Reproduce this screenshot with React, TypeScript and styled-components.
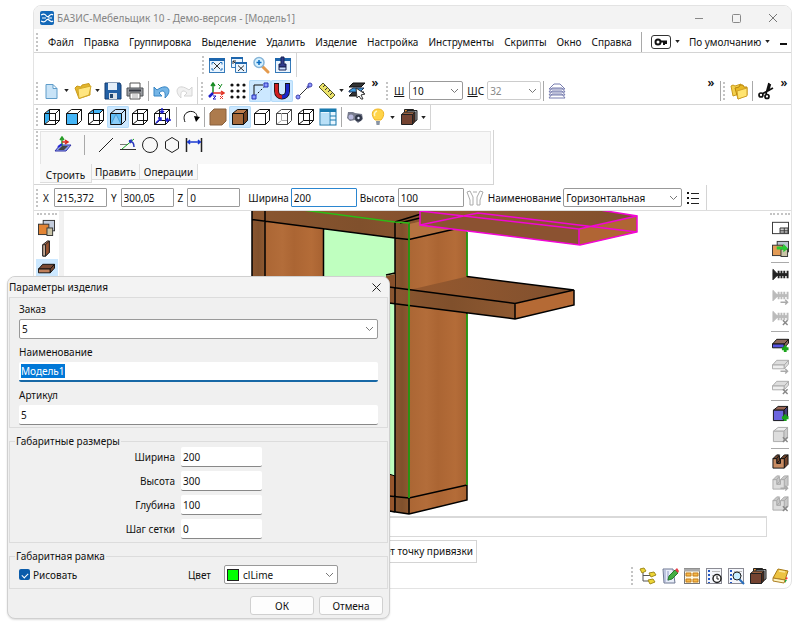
import React, { ReactNode, useEffect, useRef } from 'react';
import styled, { createGlobalStyle, css } from 'styled-components';

const uiFont = '"Noto Sans", "Open Sans", sans-serif';

const GlobalStyle = createGlobalStyle`
  * { box-sizing: border-box; }
  body { margin: 0; background: #fff; color: #111; font: 10px/14px ${uiFont}; }
  button, input, select { font: inherit; color: inherit; margin: 0; }
  svg { display: block; flex: none; }
`;

/* ---------- icons ---------- */

const Cube = ({ front = 'none', top = 'none', side = 'none', back = true, color = '#111' }: { front?: string; top?: string; side?: string; back?: boolean; color?: string }) => (
  <g stroke={color} strokeLinejoin="round" fill="none">
    <path d="M1.5 5.5 6.5 1.5H16.5L12.5 5.5Z" fill={top} />
    <path d="M12.5 5.5 16.5 1.5V12.5L12.5 16.5Z" fill={side} />
    <path d="M1.5 5.5H12.5V16.5H1.5Z" fill={front} />
    {back && <path d="M6.5 1.5V12.5H16.5M6.5 12.5 1.5 16.5" />}
  </g>
);

const Board = ({ a = '#7a4a34', b = '#c0805c', line = '#111' }: { a?: string; b?: string; line?: string }) => (
  <g stroke={line} strokeLinejoin="round">
    <path d="M.5 8.500 5 3.500H17.500L13 8.500Z" fill={a} />
    <path d="M.5 8.500H13V12.500H.5Z" fill={b} />
    <path d="M13 8.500 17.500 3.500V7.500L13 12.500Z" fill={a} />
  </g>
);

const Screw = ({ color }: { color: string }) => (
  <g stroke={color} fill={color}>
    <path d="M1 2.500 5 6.500V9.500L1 13.500Z" />
    <path d="M1 8H17" strokeWidth="3" />
    <path d="M7 4V12M10 4V12M13 4V12M16.500 4V12" strokeWidth="2" />
  </g>
);

const Groove = ({ a = '#c78b62', b = '#71442b', line = '#111' }: { a?: string; b?: string; line?: string }) => (
  <g stroke={line} strokeLinejoin="round">
    <path d="M1 6 5 2H8L5 6ZM9 6 13 2H17L13 6ZM13 6 17 2V12L13 16Z" fill={b} />
    <path d="M5 6 8 3V8L5 11Z" fill={b} />
    <path d="M5 11 8 8H9V11Z" fill={b} />
    <path d="M1 6H5V11H9V6H13V16H1Z" fill={a} />
  </g>
);

const plus = <path d="M14 10V17M10.500 13.500H17.500" stroke="#1aa51a" strokeWidth="3" />;
const arrow = <path d="M9 15H16M14 12.500 16.500 15 14 17.500" stroke="#aaa" fill="none" strokeWidth="1.500" />;
const cross = <path d="M11.500 12 16.500 17M16.500 12 11.500 17" stroke="#888" strokeWidth="1.500" />;
const frame = (
  <>
    <rect x="1.500" y="2.500" width="15" height="14" fill="#eaf5ff" stroke="#3579b8" />
    <path d="M1 3.500H17" stroke="#1e66ad" strokeWidth="3" />
  </>
);
const sheet = (
  <>
    <rect x="1.500" y="1.500" width="15" height="15" fill="#f4f6fb" stroke="#8b8b94" />
    <path d="M4 3V16" stroke="#2457c5" strokeWidth="2" strokeDasharray="2 2" />
    <path d="M7 4.500H15M7 8.500H15" stroke="#bbb" />
  </>
);
const folder = (
  <>
    <path d="M1 6 3 4 7 5 8 3 15 1.500 16 4V13L5 16.500Z" fill="#e3b52c" stroke="#c99a1b" />
    <path d="M4 7 17 4 15 13 5 16.500Z" fill="#ffe680" stroke="#d3a928" />
  </>
);
const woodBoxes = (
  <g stroke="#222" strokeLinejoin="round">
    <path d="M4.500 1.500H13.500V5H4.500Z" fill="#e9953b" />
    <path d="M7 2.500H17V12L14 14H7Z" fill="#a4a7ac" />
    <path d="M1.500 6.500 4.500 4H15L12.500 6.500Z" fill="#98603f" />
    <path d="M12.500 6.500 15 4V13.500L12.500 16.500Z" fill="#4b2a1c" />
    <rect x="1.500" y="6.500" width="11" height="10" fill="#744331" />
  </g>
);

const icons: Record<string, ReactNode> = {
  fit: <>{frame}<path d="M6 7 12 13M12 7 6 13" stroke="#333" /><path d="M4 8.500V6.500H6M12 6.500H14V8.500M14 12V14H12M6 14H4V12" stroke="#2573bd" fill="none" /></>,
  fitMany: <><path d="M1.500 1.500H12.500V11.500H1.500Z" fill="#eaf5ff" stroke="#3579b8" /><path d="M1 2H13" stroke="#1e66ad" strokeWidth="2" /><path d="M3 5 6 8M3 8V5H6" stroke="#333" fill="none" /><path d="M5.500 6.500H16.500V16.500H5.500Z" fill="#eaf5ff" stroke="#3579b8" /><path d="M5 7H17" stroke="#1e66ad" strokeWidth="2" /><path d="M8 9.500 14 15M14 9.500 8 15" stroke="#333" /></>,
  zoom: <><path d="M10 10 16 16" stroke="#e49a4d" strokeWidth="3" strokeLinecap="round" /><circle cx="7" cy="6.500" r="5" fill="#d7f2ff" stroke="#87b5d8" strokeWidth="1.500" /><path d="M4.500 6.500H9.500M7 4V9" stroke="#0b6dc2" strokeWidth="1.500" /></>,
  brush: <>{frame}<path d="M7 1H10V8H12V11H5V8H7Z" fill="#303b8c" stroke="#172052" /><path d="M5 11H12V14H5Z" fill="#c9ddff" stroke="#172052" /></>,
  newFile: <path d="M3 2.500H10L14 6.500V16.500H3ZM10 2.500V6.500H14" fill="#c8e3f7" stroke="#5f9cc9" />,
  folder,
  folders: <><path d="M1 4 3 3 5 4 11 2 12 11 3 14Z" fill="#f3cf4b" stroke="#c99a1b" /><path d="M5 6 9 5 10 3 13 3 14 5 17 5V13L8 17Z" fill="#e8b923" stroke="#b9860c" /><path d="M7 9 17 6V14L8 17Z" fill="#ffe470" stroke="#cfa027" /></>,
  save: <><path d="M1 1H16L17 3V17H1Z" fill="#2360a5" stroke="#153d70" /><path d="M4 1H13V8H4Z" fill="#e4eef8" /><path d="M5 11H13V17H5Z" fill="#dce2e8" /><path d="M6 12H9V16H6Z" fill="#24476f" /></>,
  print: <><path d="M4 1H14V7H4Z" fill="#fff" stroke="#555" /><path d="M1 6H17V14H1Z" fill="#9a9da2" stroke="#4f5257" /><path d="M3 8.500H15" stroke="#343840" strokeWidth="2" /><path d="M4 11H14V17H4Z" fill="#fff" stroke="#555" /><path d="M6 13H12M6 15H12" stroke="#aaa" /></>,
  undo: <path d="M1 5V14H9L6 11C10 7 13 9 12 16C20 9 15 0 4 8Z" fill="#75b5e6" stroke="#3684c3" />,
  redo: <path d="M17 5V14H9L12 11C8 7 5 9 6 16C-2 9 3 0 14 8Z" fill="#f1f1f1" stroke="#d4d4d4" />,
  axes: <g fill="none" strokeWidth="1.500"><path d="M6 11V2M4 4 6 1 8 4" stroke="#168c22" /><path d="M6 11H16M14 9 17 11 14 13" stroke="#e33427" /><path d="M6 11 2 15" stroke="#1919c8" strokeWidth="2.500" /><path d="M11 2 13 4M15 2 12 7" stroke="#168c22" strokeWidth="1" /><path d="M6 14H9L6 17H9" stroke="#1919c8" strokeWidth="1" /><path d="M13 14 16 17M16 14 13 17" stroke="#e33427" strokeWidth="1" /></g>,
  dots: <g fill="#111">{[3, 9, 15].map(x => [3, 9, 15].map(y => <circle key={`${x}${y}`} cx={x} cy={y} r="1.600" />))}</g>,
  snap: <g fill="none" stroke="#111"><path d="M3 13V3H12" /><path d="M4 14 14 4" strokeDasharray="2 2" /><path d="M1 13H5V17H1ZM13 1H17V5H13Z" fill="#8f9cff" stroke="#2531b5" /></g>,
  magnet: <><path d="M3.500 1V9C3.500 17 14.500 17 14.500 9V1" fill="none" stroke="#111" strokeWidth="5" /><path d="M3.500 2V9C3.500 13 6 15 9 15" fill="none" stroke="#cf1f1f" strokeWidth="3.500" /><path d="M14.500 2V9C14.500 13 12 15 9 15" fill="none" stroke="#1a26c8" strokeWidth="3.500" /></>,
  nodes: <><path d="M3 15 15 3" stroke="#333" /><g fill="#8c97ff" stroke="#4244ad"><circle cx="3" cy="15" r="2" /><circle cx="15" cy="3" r="2" /><circle cx="13" cy="5" r="1" /></g></>,
  ruler: <><path d="M1 5 5 1 17 13 13 17Z" fill="#ece36a" stroke="#57572a" /><path d="M7 3 5 5M9.500 5.500 7 8M12 8 10 10M14.500 10.500 12 13" stroke="#333" /></>,
  layerPick: <><path d="M1 5 5 1H17L13 5Z M1 14 5 10H16L12 14Z" fill="#333" stroke="#111" /><path d="M1 9 5 6H16L12 10H1Z" fill="#3d9de0" stroke="#235" /><path d="M8 6 17 12 13 13 15 17 13 17 11 14 9 16Z" fill="#fff" stroke="#333" /></>,
  layers: <g fill="#fff" stroke="#777caf"><path d="M1 16 4 12H14L17 16Z M1 13 4 9H14L17 13Z M1 10 4 6H14L17 10ZM1 7 6 2H12L17 7Z" /></g>,
  scissors: <g fill="none" stroke="#111" strokeWidth="1.700"><path d="M12 1 9 12M16 6 5 12" /><circle cx="4" cy="13" r="2" /><circle cx="10" cy="14.500" r="2" /><path d="M13 2 11 9" strokeWidth="2.500" /></g>,
  cubeLeft: <><path d="M2 6 6 2V12L2 16Z" fill="#34aef0" /><Cube /></>,
  cubeFront: <Cube front="#45b6f7" back={false} />,
  cubeTop: <Cube top="#45b6f7" />,
  cubeAll: <><Cube front="#62bff7" back={false} /><path d="M2 16 7 6 12 16" fill="#8bcdf8" stroke="#4a9fd4" /></>,
  cubeBottom: <Cube />,
  cubeSections: <><Cube /><path d="M9 0V5M7 3 9 5 11 3M18 12H13M15 10 13 12 15 14M3 15 8 10M5 10H8V13" stroke="#2424d6" fill="none" strokeWidth="1.500" /></>,
  rotate: <><path d="M3 14C-2 2 15 0 15 9" stroke="#111" fill="none" /><path d="M12 8 18 9 14 14Z" /></>,
  wood: <path d="M1 5 5 1H17V13L13 17H1Z" fill="#ad7b4d" stroke="#87613e" />,
  woodCube: <Cube front="#a66a3c" top="#bc7c4d" side="#744323" back={false} />,
  cubeWhite: <Cube front="#fff" back={false} />,
  cubePale: <><Cube back={false} color="#444" /><path d="M6.500 5V12.500H12M6 13 2 16" stroke="#aaa" fill="none" /></>,
  cubeWire: <Cube />,
  layout: <><rect x="1" y="1" width="16" height="16" fill="#e8f6ff" stroke="#1675a9" /><path d="M1 2.500H17" stroke="#197bb0" strokeWidth="3" /><path d="M11 4V17M11 8H17M11 12H17" stroke="#197bb0" /><path d="M2 5H10V16H2Z" fill="#b9e0f7" /></>,
  camera: <><path d="M2 4H7L9 5 16 6 17 11 12 15 9 12 4 13 1 10Z" fill="#777b8c" /><circle cx="12.500" cy="10" r="3.500" fill="#333a4b" /><circle cx="5" cy="9" r="2.500" fill="#b8b9dd" /><circle cx="12.500" cy="10" r="1.200" fill="#e7edff" /></>,
  bulb: <><path d="M9 1C2 1 2 8 6 12H12C16 8 16 1 9 1Z" fill="#ffd448" stroke="#efb527" /><path d="M8 3C5 4 5 7 6 8" stroke="#fff6c8" strokeWidth="1.500" fill="none" /><path d="M7 13H11L10.500 17H7.500Z" fill="#8994a3" /></>,
  woodBoxes,
  plane: <><path d="M1 15 6 9H17L12 15Z" fill="#8da1ed" stroke="#3130a5" /><path d="M4 14 8 10H14L10 14Z" fill="#444" /><path d="M8 10V2M6 4 8 1 10 4" stroke="#289d29" fill="none" strokeWidth="1.500" /><path d="M8 6H13M11 4 14 6 11 8" stroke="#d6291f" fill="none" strokeWidth="1.500" /><path d="M8 8 4 11" stroke="#2424d6" strokeWidth="2" /></>,
  line: <path d="M2 16 16 2" stroke="#222" />,
  angle: <><path d="M1 13.500H17" stroke="#333" /><path d="M1 8.500H9" stroke="#777" /><path d="M3 13 15 3" stroke="#17a124" /><path d="M10 5C14 5 15 8 15 11M10 5 13 4M10 5 12 7" stroke="#2838bd" fill="none" strokeWidth="1.500" /></>,
  circle: <circle cx="9" cy="9" r="7.500" fill="none" stroke="#222" />,
  hexagon: <path d="M9 1.500 15.500 5.500V12.500L9 16.500 2.500 12.500V5.500Z" fill="none" stroke="#222" />,
  dimension: <><path d="M1.500 2V16M16.500 2V16" stroke="#222" strokeWidth="1.500" /><path d="M2 6H16M5 4 3 6 5 8M13 4 15 6 13 8" stroke="#1b3ad1" fill="none" strokeWidth="1.500" /></>,
  hands: <g fill="#fff" stroke="#aaa"><path d="M1 3 4 2 7 8 7 16H4V11Z M17 3 14 2 11 8 11 16H14V11ZM7 3H11" /></g>,
  list: <><path d="M4 3V5M4 8V10M4 13V15" stroke="#111" strokeWidth="2" /><path d="M7 4.500H15M7 9.500H15M7 14.500H15" stroke="#222" /></>,
  panels: <g stroke="#333"><rect x="5.500" y="1.500" width="12" height="11" fill="#c3ccdc" /><rect x=".5" y="5.500" width="11" height="11" fill="#e28434" /><rect x="9.500" y="9.500" width="6" height="8" fill="#c9c4a7" /></g>,
  vertical: <g stroke="#222" strokeLinejoin="round"><path d="M5 5 10 1H12V13L8 17H5Z" fill="#a6684b" /><path d="M5 5H8V17H5Z" fill="#c5aa97" /><path d="M8 5 12 1V13L8 17Z" fill="#985331" /></g>,
  board: <Board />,
  workspace: <><rect x=".5" y="3.500" width="17" height="12" fill="#fff" stroke="#333" /><path d="M8.500 9.500H17V15H8.500ZM8.500 12.500H17M13 9.500V15" stroke="#333" fill="#ccc" /></>,
  panelsGo: <><g stroke="#333"><rect x="5.500" y="1.500" width="12" height="11" fill="#bbc5d0" /><rect x=".5" y="5.500" width="11" height="11" fill="#e39b56" /><rect x="9.500" y="9.500" width="7" height="8" fill="#c9c4a7" /></g><path d="M5 7H12V4L17 9 12 13V10H5Z" fill="#27c933" /></>,
  screw: <Screw color="#222" />,
  screwGo: <><Screw color="#bbb" />{arrow}</>,
  screwDel: <><Screw color="#bbb" />{cross}</>,
  boardAdd: <><Board b="#5654e1" a="#8d6a5c" />{plus}</>,
  boardGo: <><Board a="#ddd" b="#eee" line="#aaa" />{arrow}</>,
  boardDel: <><Board a="#ddd" b="#eee" line="#aaa" />{cross}</>,
  blockAdd: <><Cube front="#6c65df" side="#463f7a" top="#9a6756" back={false} />{plus}</>,
  blockDel: <><Cube front="#ddd" side="#ccc" top="#eee" color="#aaa" back={false} />{cross}</>,
  groove: <Groove />,
  grooveGo: <><Groove a="#ddd" b="#c8c8c8" line="#aaa" />{arrow}</>,
  grooveDel: <><Groove a="#ddd" b="#c8c8c8" line="#aaa" />{cross}</>,
  tree: <><path d="M4 4V14H11M4 8.500H11" fill="none" stroke="#555" /><g fill="#edd536" stroke="#a28b1c"><path d="M1 2 5 1 7 4 3 6Z M10 6 15 5 17 8 12 10Z M9 13 14 12 16 15 11 17Z" /></g></>,
  edit: <><path d="M2 2H12L14 16H3Z" fill="#e8edf8" stroke="#6c7692" /><path d="M4 3V15M7 4V14" stroke="#929cc5" /><path d="M7 13 8 9 14 3 17 6 11 12Z" fill="#45ad43" stroke="#277a2b" /><path d="M14 3 16 1 18 4 17 6Z" fill="#e63c46" /></>,
  cards: <><rect x="1.500" y="1.500" width="15" height="15" fill="#fff8df" stroke="#777" /><path d="M1 3H17" stroke="#aaa" strokeWidth="3" /><g fill="#f4b948" stroke="#c67c1a"><path d="M3 6H8V9H3ZM10 6H15V9H10ZM3 12H8V15H3ZM10 12H15V15H10Z" /></g></>,
  history: <>{sheet}<circle cx="12" cy="11.500" r="4" fill="#fff" stroke="#222" strokeWidth="1.500" /><path d="M12 9V12H14" stroke="#222" fill="none" /></>,
  search: <>{sheet}<path d="M12 12 17 17" stroke="#276ebc" strokeWidth="2" /><circle cx="10" cy="9" r="4" fill="#c8edff" stroke="#222" /></>,
  book: <><path d="M2 11 7 2 17 4 14 13Z" fill="#edc342" stroke="#a77a18" /><path d="M8 4 14 5" stroke="#fbe79a" strokeWidth="1.500" /><path d="M2 11 14 13 13 16 2 14Z" fill="#fff5c0" stroke="#ad7e23" /><path d="M15 10 17 11 15 13Z" fill="#f33" /><path d="M14 13 16 13 14 16Z" fill="#2a4" /></>,
};

const Icon = ({ name, size = 18 }: { name: string; size?: number }) => (
  <svg width={size} height={size} viewBox="0 0 18 18" aria-hidden="true">{icons[name]}</svg>
);

const Caret = () => <svg width="5" height="3" viewBox="0 0 6 4" aria-hidden="true"><path d="M0 0H6L3 4Z" fill="#222" /></svg>;

/* ---------- page parts ---------- */

const Page = styled.main`
  position: relative;
  padding: 5px 8px 39px 33px;
  min-height: 100vh;
`;

const AppWindow = styled.div`
  border: 1px solid #e3e3e3;
  border-radius: 8px;
  overflow: hidden;
  background: #fff;
`;

const TitleBar = styled.header`
  display: flex;
  align-items: center;
  height: 23px;
  padding-left: 6px;
  gap: 3px;
  background: #f3f3f3;
  color: #858585;
`;

const Fill = styled.span`
  flex: 1;
`;

const PlainButton = styled.button`
  display: flex;
  align-items: center;
  justify-content: center;
  padding: 0;
  border: 0;
  background: transparent;
  white-space: nowrap;
`;

const CaptionButton = styled(PlainButton)`
  width: 37px;
  height: 22px;
`;

const MenuBar = styled.nav`
  display: flex;
  align-items: center;
  height: 24px;
  padding: 2px 4px 0 2px;
  border-bottom: 1px solid #d4d4d4;
`;

const MenuItems = styled.div`
  display: flex;
  gap: 10px;
  margin-left: 10px;
`;

const Grip = styled.span<{ $horizontal?: boolean }>`
  flex: none;
  ${p => p.$horizontal
    ? css`width: 20px; height: 2px; border-top: 2px dotted #c4c4c4; margin: 2px 0;`
    : css`width: 2px; height: 18px; border-left: 2px dotted #c4c4c4;`}
`;

const Divider = styled.span<{ $gap?: number }>`
  flex: none;
  width: 1px;
  height: 20px;
  margin: 0 ${p => p.$gap ?? 4}px;
  background: #a9a9a9;
`;

const Bar = styled.div<{ $height: number; $line?: boolean }>`
  display: flex;
  align-items: center;
  height: ${p => p.$height}px;
  border-bottom: ${p => (p.$line ? '1px solid #d4d4d4' : 0)};
`;

const Band = styled.div<{ $left?: number; $line?: boolean }>`
  display: flex;
  align-items: center;
  align-self: stretch;
  padding: 0 2px;
  margin-left: ${p => p.$left ?? 0}px;
  border-right: 1px solid #d4d4d4;
  border-bottom: ${p => (p.$line ? '1px solid #d4d4d4' : 0)};
`;

const ToolGroup = styled.div<{ $left?: number; $gap?: number }>`
  display: flex;
  align-items: center;
  gap: ${p => p.$gap ?? 0}px;
  margin-left: ${p => p.$left ?? 0}px;
`;

const ToolButton = styled(PlainButton)<{ $active?: boolean; $wide?: boolean }>`
  flex: none;
  gap: 3px;
  width: ${p => (p.$wide ? 31 : 22)}px;
  height: 22px;
  border-radius: 2px;
  ${p => p.$active && css`background: #cce8ff; box-shadow: inset 0 0 0 1px #b5dcfa;`}
`;

const More = styled(PlainButton)`
  align-self: flex-start;
  width: 14px;
  height: 12px;
  font-size: 12px;
  font-weight: 600;
`;

const KeyButton = styled(PlainButton)`
  width: 20px;
  height: 14px;
  border: 1px solid #333;
  border-radius: 3px;
`;

const Field = styled.input<{ $width: number; $accent?: boolean }>`
  width: ${p => p.$width}px;
  height: 19px;
  padding: 0 2px;
  border: 1px solid ${p => (p.$accent ? '#2b86d0' : '#9b9b9b')};
  border-radius: 1px;
  background: #fff;
  outline: none;
`;

const Label = styled.label<{ $left?: number; $right?: number }>`
  margin-left: ${p => p.$left ?? 0}px;
  margin-right: ${p => p.$right ?? 0}px;
  white-space: nowrap;
`;

const SelectBox = styled.span<{ $width?: number; $muted?: boolean }>`
  display: grid;
  align-items: center;
  width: ${p => (p.$width ? `${p.$width}px` : '100%')};
  height: 19px;
  border: 1px solid ${p => (p.$muted ? '#ccc' : '#999')};
  border-radius: 2px;
  background: #fff;
  color: ${p => (p.$muted ? '#888' : '#111')};
  > * { grid-area: 1 / 1; }
  > svg { justify-self: end; margin-right: 3px; pointer-events: none; }
`;

const NativeSelect = styled.select<{ $indent?: number }>`
  appearance: none;
  width: 100%;
  padding: 0 14px 0 ${p => p.$indent ?? 2}px;
  border: 0;
  background: transparent;
  outline: none;
  &:disabled { opacity: 1; }
`;

const Swatch = styled.span`
  width: 12px;
  height: 12px;
  margin-left: 2px;
  border: 1px solid #222;
  background: #0f0;
`;

const Chevron = () => <svg width="9" height="6" viewBox="0 0 9 6" aria-hidden="true"><path d="M1 1 4.500 4.500 8 1" fill="none" stroke="#777" /></svg>;

function Select({ id, value, width, muted, swatch }: { id: string; value: string; width?: number; muted?: boolean; swatch?: boolean }) {
  return (
    <SelectBox $width={width} $muted={muted}>
      {swatch && <Swatch />}
      <NativeSelect id={id} disabled={muted} $indent={swatch ? 18 : 2}><option>{value}</option></NativeSelect>
      <Chevron />
    </SelectBox>
  );
}

const Ribbon = styled.section`
  display: flex;
  width: 460px;
  height: 55px;
  padding: 1px 2px 1px 2px;
  border-right: 1px solid #d4d4d4;
  border-bottom: 1px solid #d4d4d4;
  gap: 2px;
`;

const RibbonBody = styled.div`
  flex: 1;
`;

const RibbonTools = styled.div`
  display: flex;
  align-items: center;
  height: 33px;
  padding: 0 0 6px 11px;
  background: #f8f8f8;
  border: 1px solid #e4e4e4;
  border-width: 1px 1px 0 1px;
`;

const Tabs = styled.div`
  display: flex;
  align-items: flex-start;
`;

const Tab = styled(PlainButton)<{ $active?: boolean }>`
  height: ${p => (p.$active ? 19 : 16)}px;
  width: ${p => (p.$active ? 52 : 48)}px;
  padding-top: ${p => (p.$active ? 3 : 0)}px;
  background: #f8f8f8;
  border-right: 1px solid #ddd;
  border-bottom: 1px solid #ddd;
  &:last-child { width: 58px; }
`;

const Workspace = styled.div`
  display: flex;
  height: 306px;
  border-top: 1px solid #ddd;
`;

const SideBar = styled.div<{ $right?: boolean }>`
  display: flex;
  flex: none;
  flex-direction: column;
  align-items: center;
  width: ${p => (p.$right ? 22 : 25)}px;
  background: #fff;
`;

const Splitter = styled.div`
  width: 5px;
  background: #f1f1f1;
`;

const Rule = styled.span`
  width: 18px;
  height: 1px;
  margin: 3px 0 2px;
  background: #aaa;
`;

const SideButton = styled(PlainButton)<{ $active?: boolean }>`
  flex: none;
  width: 22px;
  height: 21px;
  ${p => p.$active && css`background: #cce8ff;`}
`;

const Viewport = styled.div`
  flex: 1;
  min-width: 0;
  overflow: hidden;
`;

const MessageBox = styled.div`
  height: 21px;
  margin-right: 24px;
  border: 1px solid #d9d9d9;
  border-width: 2px 1px 1px 0;
`;

const StatusRow = styled.div`
  display: flex;
  margin-top: 3px;
`;

const Status = styled.div`
  width: 443px;
  height: 23px;
  padding: 3px;
  border: 1px solid #d4d4d4;
  text-align: right;
`;

const BottomTools = styled.div`
  display: flex;
  align-items: center;
  justify-content: flex-end;
  height: 25px;
`;

/* ---------- dialog ---------- */

const Dialog = styled.form`
  position: absolute;
  left: 7px;
  top: 276px;
  width: 383px;
  border: 1px solid #d0d0d0;
  border-radius: 8px;
  overflow: hidden;
  background: #f0f0f0;
  box-shadow: 0 1px 2px #0002;
`;

const DialogTitle = styled.header`
  display: flex;
  align-items: center;
  justify-content: space-between;
  height: 20px;
  padding: 0 7px 0 1px;
  background: #f3f3f3;
`;

const Group = styled.fieldset<{ $height: number; $top?: number }>`
  min-width: 0;
  height: ${p => p.$height}px;
  margin: ${p => p.$top ?? 0}px 1px 0;
  padding: 0 9px;
  border: 1px solid #dcdcdc;
  > legend { margin-left: -4px; padding: 0 1px; line-height: 12px; }
`;

const Stack = styled.div`
  display: flex;
  flex-direction: column;
  padding-top: 3px;
  > label { height: 18px; padding-top: 1px; }
  > input, > span { height: 20px; margin-bottom: 5px; }
`;

const LineField = styled.input<{ $focused?: boolean }>`
  width: 100%;
  height: 20px;
  padding: 0 2px;
  border: 0;
  border-bottom: ${p => (p.$focused ? '2px solid #1768a6' : '1px solid #888')};
  border-radius: 2px;
  background: #fff;
  outline: none;
  &::selection { background: #0078d7; color: #fff; }
`;

const SizeGrid = styled.div`
  display: grid;
  grid-template-columns: 156px 81px;
  gap: 4px 6px;
  align-items: center;
  > label { text-align: right; }
`;

const FrameRow = styled.div`
  display: flex;
  align-items: center;
  padding: 3px 40px 0 0;
`;

const Check = styled.input`
  display: grid;
  place-items: center;
  appearance: none;
  width: 11px;
  height: 11px;
  margin: 0 3px 0 0;
  border-radius: 2px;
  background: #0a5cab;
  &::after {
    content: "";
    width: 5px;
    height: 3px;
    border: solid #fff;
    border-width: 0 0 1px 1px;
    transform: rotate(-45deg);
  }
`;

const Actions = styled.footer`
  display: flex;
  justify-content: flex-end;
  gap: 5px;
  padding: 7px 6px 3px;
`;

const DialogButton = styled.button`
  width: 64px;
  height: 19px;
  padding: 0;
  border: 1px solid #d0d0d0;
  border-radius: 3px;
  background: #fdfdfd;
`;

/* ---------- data ---------- */

const menus = ['Файл', 'Правка', 'Группировка', 'Выделение', 'Удалить', 'Изделие', 'Настройка', 'Инструменты', 'Скрипты', 'Окно', 'Справка'];
const rightTools = ['workspace', 'panelsGo', '|', 'screw', 'screwGo', 'screwDel', '|', 'boardAdd', 'boardGo', 'boardDel', '|', 'blockAdd', 'blockDel', '|', 'groove', 'grooveGo', 'grooveDel'];
const sizes = [['Ширина', '200'], ['Высота', '300'], ['Глубина', '100'], ['Шаг сетки', '0']];

const Tool = ({ name, active, menu }: { name: string; active?: boolean; menu?: boolean }) => (
  <ToolButton type="button" aria-label={name} $active={active} $wide={menu}>
    <Icon name={name} />{menu && <Caret />}
  </ToolButton>
);

const Scene = () => (
  <svg width="704" height="305" viewBox="64 211 704 305" role="img" aria-label="Модель1">
    <defs>
      <linearGradient id="side" x1="0" x2="1">
        <stop offset="0" stopColor="#ab6634" /><stop offset=".3" stopColor="#b36d3a" /><stop offset=".5" stopColor="#ab6533" /><stop offset=".8" stopColor="#b46c38" /><stop offset="1" stopColor="#a86231" />
      </linearGradient>
      <linearGradient id="dark" x1="0" x2="1">
        <stop offset="0" stopColor="#8a5630" /><stop offset=".5" stopColor="#80502c" /><stop offset="1" stopColor="#8e5931" />
      </linearGradient>
      <linearGradient id="surface" x1="0" x2="1">
        <stop offset="0" stopColor="#96592f" /><stop offset="1" stopColor="#80502e" />
      </linearGradient>
    </defs>
    <path d="M323 220H395V476H323Z" fill="#bfffbf" />
    <path d="M265 215H323V300H265Z" fill="url(#side)" />
    <path d="M252 210H265V300H252Z" fill="url(#dark)" />
    <path d="M389 474 395 476V512L389 511Z" fill="#97562c" stroke="#000" />
    <path d="M409 223 467 210V500L409 514Z" fill="url(#side)" />
    <path d="M252 210H430L467 214 409 224 395 221.500V238L252 219.500Z" fill="url(#dark)" />
    <path d="M303 210H430L420 214 400 221Z" fill="url(#surface)" />
    <path d="M395 221H409V514L395 512Z" fill="url(#dark)" />
    <path d="M410 224 422 221V225L455 229 410 239.500Z" fill="#b57240" />
    <g fill="none" stroke="#000" strokeWidth="1.500">
      <path d="M252 210V300M265 210V300M323.500 228V300M252 219.500 395 238 409 239.500 455 229M395 222V513M409 223V514M395 222 421 214M400 223 420 218M467 232V500L409 514 389 511M389 496 409 498 467 485M386 275 395 273" />
    </g>
    <path d="M386 276 395 274V288L386 287Z" fill="#88502b" />
    <path d="M409 290 467 276.500 574 290 515 303.500Z" fill="url(#surface)" />
    <path d="M389 287 515 303.500V319L389 303Z" fill="url(#dark)" />
    <path d="M515 303.500 574 290V305L515 319Z" fill="#b56a35" />
    <path d="M467 276.500 574 290 515 303.500 389 287M389 303 515 319 574 305V290M515 303.500V319M395 287V304" fill="none" stroke="#000" strokeWidth="1.500" />
    <path d="M303 210 395 222 409 223V498M467 232V276M467 314V485" fill="none" stroke="#2dbb16" strokeWidth="1.500" />
    <path d="M420 210H600L637 216V232L580 245 420 225Z" fill="#8b5231" />
    <path d="M430 212 458 210H600L637 216 579 229Z" fill="url(#surface)" />
    <path d="M579 229 637 216V232L580 245Z" fill="#b06534" />
    <path d="M420 210V225L580 245 637 232V216L600 210M420 211 579 229 637 216M579 229V245M420 225 478 213 637 232" fill="none" stroke="#f205d5" strokeWidth="1.500" />
  </svg>
);

function ProductDialog() {
  const nameField = useRef<HTMLInputElement>(null);
  useEffect(() => {
    nameField.current?.focus();
    nameField.current?.select();
  }, []);
  return (
    <Dialog role="dialog" aria-labelledby="dialog-title" onSubmit={e => e.preventDefault()}>
      <DialogTitle>
        <span id="dialog-title">Параметры изделия</span>
        <PlainButton type="button" aria-label="Закрыть"><svg width="11" height="11" viewBox="0 0 11 11"><path d="M1.500 1.500 9.500 9.500M9.500 1.500 1.500 9.500" stroke="#222" /></svg></PlainButton>
      </DialogTitle>
      <Group $height={131}>
        <Stack>
          <label htmlFor="order">Заказ</label>
          <Select id="order" value="5" />
          <label htmlFor="name">Наименование</label>
          <LineField id="name" ref={nameField} defaultValue="Модель1" $focused />
          <label htmlFor="article">Артикул</label>
          <LineField id="article" defaultValue="5" />
        </Stack>
      </Group>
      <Group $height={108} $top={7}>
        <legend>Габаритные размеры</legend>
        <SizeGrid>
          {sizes.map(([label, value], i) => (
            <React.Fragment key={label}>
              <label htmlFor={`size${i}`}>{label}</label>
              <LineField id={`size${i}`} defaultValue={value} />
            </React.Fragment>
          ))}
        </SizeGrid>
      </Group>
      <Group $height={39} $top={7}>
        <legend>Габаритная рамка</legend>
        <FrameRow>
          <Check id="draw" type="checkbox" defaultChecked />
          <label htmlFor="draw">Рисовать</label>
          <Fill />
          <Label htmlFor="color" $right={13}>Цвет</Label>
          <Select id="color" value="clLime" width={114} swatch />
        </FrameRow>
      </Group>
      <Actions>
        <DialogButton type="submit">ОК</DialogButton>
        <DialogButton type="button">Отмена</DialogButton>
      </Actions>
    </Dialog>
  );
}

export default function App() {
  return (
    <Page>
      <GlobalStyle />
      <AppWindow>
        <TitleBar>
          <svg width="14" height="14" viewBox="0 0 14 14" aria-hidden="true"><rect width="14" height="14" rx="2" fill="#1368b8" /><path d="M1 4C3 3 5 3 6 4.500S8 6 9 5 12 3 13 4M2 7H6M8 7H12M1 10C3 11 5 11 6 9.500S8 8 9 9 12 11 13 10" stroke="#fff" fill="none" strokeWidth="1.200" /></svg>
          <span>БАЗИС-Мебельщик 10 - Демо-версия - [Модель1]</span>
          <Fill />
          <ToolGroup>
            <CaptionButton type="button" aria-label="Свернуть"><svg width="10" height="10"><path d="M1 5.500H9" stroke="#888" /></svg></CaptionButton>
            <CaptionButton type="button" aria-label="Развернуть"><svg width="10" height="10"><rect x="1.500" y="1.500" width="8" height="8" rx="1" fill="none" stroke="#888" /></svg></CaptionButton>
            <CaptionButton type="button" aria-label="Закрыть"><svg width="10" height="10"><path d="M1 1 9 9M9 1 1 9" stroke="#777" /></svg></CaptionButton>
          </ToolGroup>
        </TitleBar>
        <MenuBar>
          <Grip />
          <MenuItems>{menus.map(m => <PlainButton type="button" key={m}>{m}</PlainButton>)}</MenuItems>
          <Divider $gap={9} />
          <KeyButton type="button" aria-label="Ключ"><svg width="14" height="8" viewBox="0 0 14 8"><circle cx="4" cy="4" r="2.500" fill="none" stroke="#111" strokeWidth="2" /><path d="M6 3.500H13M10 4V7M12 4V6" stroke="#111" strokeWidth="2" /></svg></KeyButton>
          <ToolGroup $left={4}><Caret /></ToolGroup>
          <ToolGroup $left={9} $gap={4}><PlainButton type="button">По умолчанию</PlainButton><Caret /></ToolGroup>
          <Fill />
          <svg width="7" height="8"><path d="M0 6H7" stroke="#111" strokeWidth="2" /></svg>
        </MenuBar>
        <Bar $height={24}>
          <Band $left={166}>
            <Grip />
            <ToolGroup $left={2}>{['fit', 'fitMany', 'zoom', 'brush'].map(n => <Tool key={n} name={n} />)}</ToolGroup>
          </Band>
        </Bar>
        <Bar $height={28} $line>
          <Band>
            <Grip />
            <ToolGroup $left={2}>
              <Tool name="newFile" menu /><Tool name="folder" menu /><Tool name="save" /><Tool name="print" /><Divider $gap={2} /><Tool name="undo" /><Tool name="redo" />
            </ToolGroup>
          </Band>
          <ToolGroup $left={3}>
            <Grip />
            <ToolGroup $left={2}><Tool name="axes" /><Tool name="dots" /><Tool name="snap" active /><Tool name="magnet" active /><Tool name="nodes" /><Tool name="ruler" menu /><Tool name="layerPick" /></ToolGroup>
          </ToolGroup>
          <Divider $gap={0} as="span" hidden />
          <More type="button">»</More>
          <ToolGroup $left={4}>
            <Grip />
            <Label htmlFor="w" $left={6} $right={5}><u>Ш</u></Label><Select id="w" value="10" width={54} />
            <Label htmlFor="ws" $left={4} $right={3}><u>Ш</u>С</Label><Select id="ws" value="32" width={54} muted />
            <Divider $gap={2} /><Tool name="layers" />
          </ToolGroup>
          <Fill />
          <More type="button">»</More>
          <Divider $gap={2} /><Grip />
          <ToolGroup $left={3}><Tool name="folders" /><Divider $gap={2} /><Tool name="scissors" /></ToolGroup>
          <More type="button">»</More>
        </Bar>
        <Bar $height={25}>
          <Band $line>
            <Grip />
            <ToolGroup $left={3}>
              {['cubeLeft', 'cubeFront', 'cubeTop', 'cubeAll', 'cubeBottom', 'cubeSections'].map(n => <Tool key={n} name={n} active={n === 'cubeAll'} />)}
              <Divider $gap={3} /><Tool name="rotate" /><Divider $gap={2} />
              {['wood', 'woodCube', 'cubeWhite', 'cubePale', 'cubeWire', 'layout'].map(n => <Tool key={n} name={n} active={n === 'woodCube'} />)}
              <Divider $gap={2} /><Tool name="camera" /><Tool name="bulb" menu /><Tool name="woodBoxes" menu />
            </ToolGroup>
          </Band>
        </Bar>
        <Ribbon>
          <Grip />
          <RibbonBody>
            <RibbonTools>
              <Tool name="plane" /><Divider $gap={10} />
              {['line', 'angle', 'circle', 'hexagon', 'dimension'].map(n => <Tool key={n} name={n} />)}
            </RibbonTools>
            <Tabs role="tablist">
              <Tab type="button" role="tab" $active>Строить</Tab>
              <Tab type="button" role="tab">Править</Tab>
              <Tab type="button" role="tab">Операции</Tab>
            </Tabs>
          </RibbonBody>
        </Ribbon>
        <Bar $height={25}>
          <Band>
            <Grip />
            <Label htmlFor="x" $left={5} $right={5}>X</Label><Field id="x" $width={53} defaultValue="215,372" />
            <Label htmlFor="y" $left={4} $right={4}>Y</Label><Field id="y" $width={53} defaultValue="300,05" />
            <Label htmlFor="z" $left={4} $right={4}>Z</Label><Field id="z" $width={53} defaultValue="0" />
            <Label htmlFor="width" $left={8} $right={2}>Ширина</Label><Field id="width" $width={66} $accent defaultValue="200" />
            <Label htmlFor="height" $left={3} $right={3}>Высота</Label><Field id="height" $width={66} defaultValue="100" />
            <Tool name="hands" />
            <Label htmlFor="title" $left={2} $right={2}>Наименование</Label><Select id="title" value="Горизонтальная" width={119} />
            <Tool name="list" />
          </Band>
        </Bar>
        <Workspace>
          <SideBar>
            <Grip $horizontal />
            <SideButton type="button" aria-label="Панели"><Icon name="panels" size={17} /></SideButton>
            <SideButton type="button" aria-label="Вертикальная"><Icon name="vertical" size={17} /></SideButton>
            <SideButton type="button" aria-label="Горизонтальная" $active><Icon name="board" size={17} /></SideButton>
          </SideBar>
          <Splitter />
          <Viewport><Scene /></Viewport>
          <SideBar $right>
            <Grip $horizontal />
            {rightTools.map((n, i) => n === '|' ? <Rule key={i} /> : <SideButton type="button" key={n} aria-label={n}><Icon name={n} size={17} /></SideButton>)}
          </SideBar>
        </Workspace>
        <MessageBox />
        <StatusRow><Status>Укажите первую точку или выберите объект, задаёт точку привязки</Status></StatusRow>
        <BottomTools>
          <Grip />
          <ToolGroup $left={4}>{['tree', 'edit', 'cards', 'history', 'search', 'woodBoxes', 'book'].map(n => <Tool key={n} name={n} />)}</ToolGroup>
        </BottomTools>
      </AppWindow>
      <ProductDialog />
    </Page>
  );
}
